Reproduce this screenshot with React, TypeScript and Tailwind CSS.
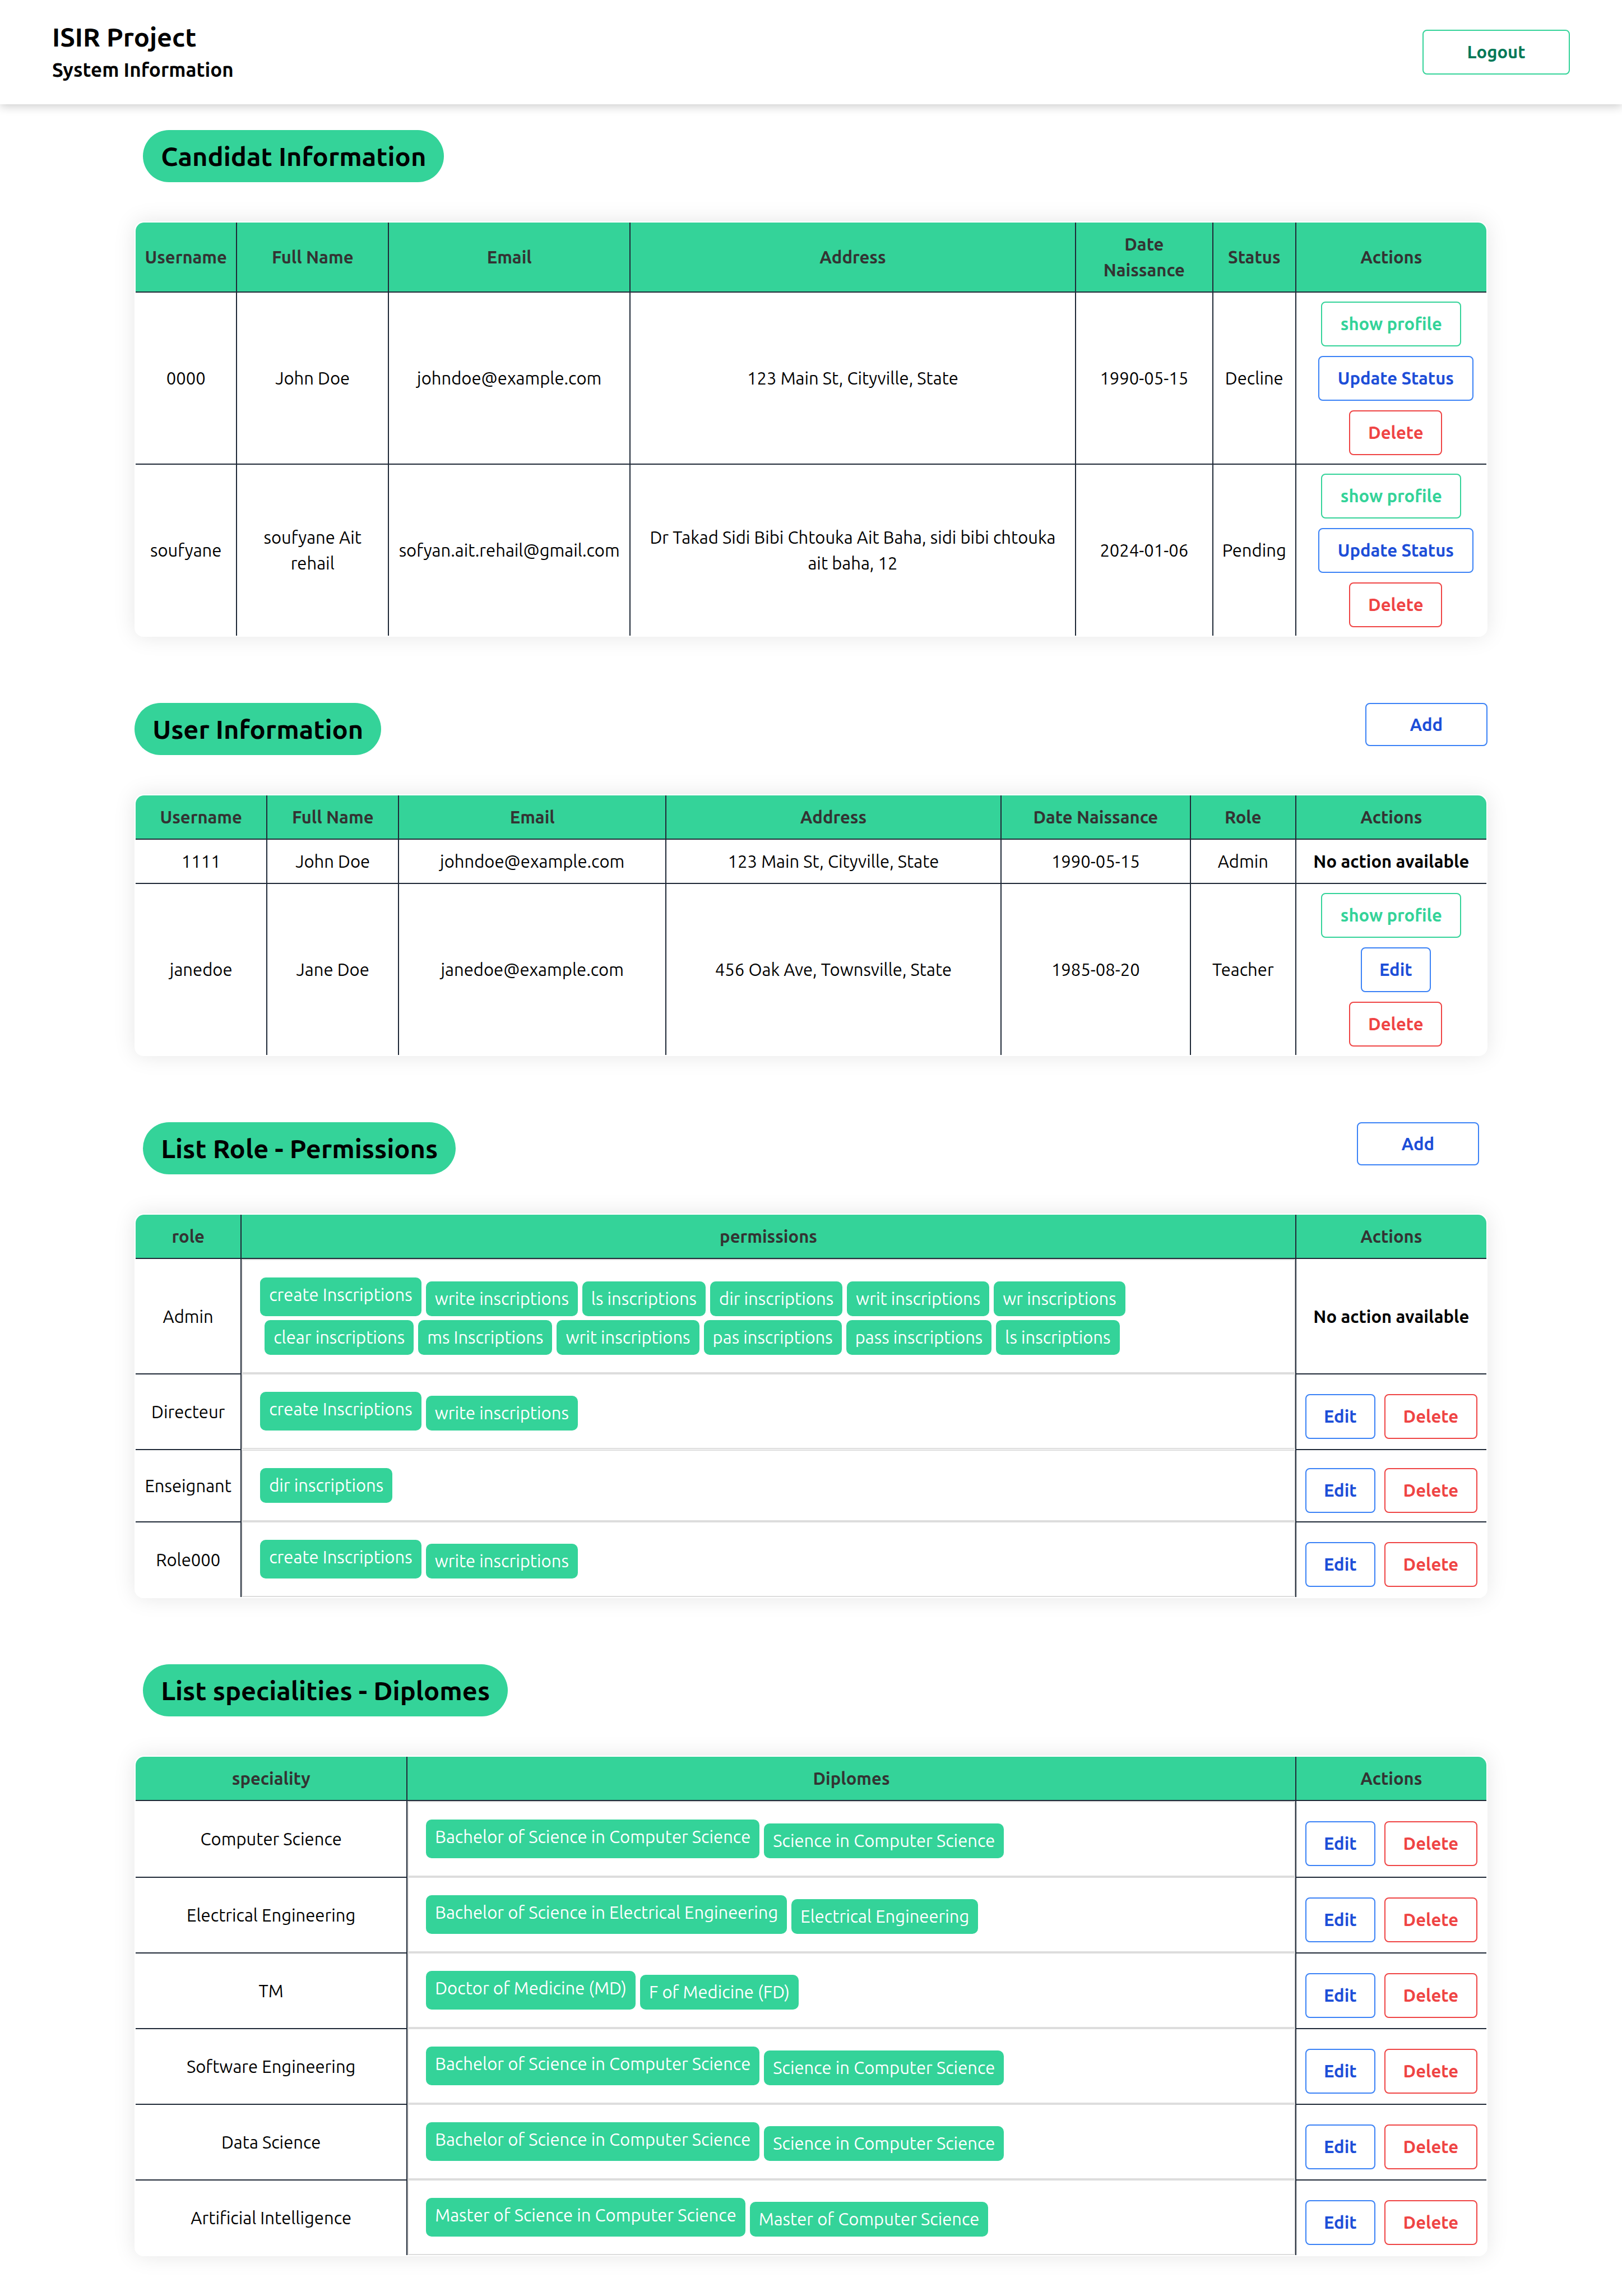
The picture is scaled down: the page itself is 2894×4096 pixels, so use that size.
import type { ReactNode } from "react";

type Tone = "green" | "blue" | "red" | "logout";

const tones: Record<Tone, string> = {
  green: "border-[#34d399] text-[#34d399]",
  blue: "border-[#3b82f6] text-[#1d4ed8]",
  red: "border-[#ef4444] text-[#ef4444]",
  logout: "border-[#34d399] text-[#047857]",
};

function Button({ tone, className, children }: { tone: Tone; className: string; children: ReactNode }) {
  return (
    <button
      type="button"
      className={`cursor-pointer rounded-[8px] border-2 bg-transparent text-center text-[31px] leading-[46px] font-bold ${tones[tone]} ${className}`}
    >
      {children}
    </button>
  );
}

function SectionHeading({ title, inset, add }: { title: string; inset?: boolean; add?: boolean }) {
  return (
    <div className={`mb-[70px] flex items-start justify-between ${inset ? "px-[15px]" : ""}`}>
      <h2 className="rounded-full bg-[#34d399] px-8 text-[47px] leading-[93px] font-bold">{title}</h2>
      {add && (
        <Button tone="blue" className="h-[77px] w-[218px]">
          Add
        </Button>
      )}
    </div>
  );
}

function TableCard({ children }: { children: ReactNode }) {
  return (
    <div className="overflow-hidden rounded-[16px] bg-white p-[2px] shadow-[0_0_39px_rgba(0,0,0,0.1)]">
      <div className="overflow-hidden rounded-t-[15px]">
        <table className="w-full table-fixed border-separate border-spacing-0 text-center text-[31px] leading-[46px]">
          {children}
        </table>
      </div>
    </div>
  );
}

type Column = { label: string; width: string };

function TableHead({ columns }: { columns: Column[] }) {
  return (
    <thead>
      <tr className="bg-[#34d399] text-[#333333]">
        {columns.map((c, i) => (
          <th
            key={c.label}
            scope="col"
            className={`border-b-2 border-[#1f2937] px-[15px] pt-4 pb-[15px] font-bold ${c.width} ${
              i < columns.length - 1 ? "border-r-2" : ""
            }`}
          >
            {c.label}
          </th>
        ))}
      </tr>
    </thead>
  );
}

function Cell({ last, end, children }: { last: boolean; end?: boolean; children: ReactNode }) {
  return (
    <td
      className={`border-[#1f2937] px-[15px] pt-4 pb-[15px] align-middle ${last ? "" : "border-b-2"} ${
        end ? "" : "border-r-2"
      }`}
    >
      {children}
    </td>
  );
}

const NoAction = () => <span className="font-bold">No action available</span>;

function StackedActions({ edit, editWidth }: { edit: string; editWidth: string }) {
  return (
    <div className="flex flex-col items-center gap-[17px]">
      <Button tone="green" className="h-[80px] w-[250px]">
        show profile
      </Button>
      <Button tone="blue" className={`ml-4 h-[80px] ${editWidth}`}>
        {edit}
      </Button>
      <Button tone="red" className="ml-4 h-[80px] w-[166px]">
        Delete
      </Button>
    </div>
  );
}

const candidatColumns: Column[] = [
  { label: "Username", width: "w-[181px]" },
  { label: "Full Name", width: "w-[271px]" },
  { label: "Email", width: "w-[431px]" },
  { label: "Address", width: "" },
  { label: "Date Naissance", width: "w-[245px]" },
  { label: "Status", width: "w-[148px]" },
  { label: "Actions", width: "w-[339px]" },
];

const candidats = [
  ["0000", "John Doe", "johndoe@example.com", "123 Main St, Cityville, State", "1990-05-15", "Decline"],
  [
    "soufyane",
    "soufyane Ait rehail",
    "sofyan.ait.rehail@gmail.com",
    "Dr Takad Sidi Bibi Chtouka Ait Baha, sidi bibi chtouka ait baha, 12",
    "2024-01-06",
    "Pending",
  ],
];

const userColumns: Column[] = [
  { label: "Username", width: "w-[235px]" },
  { label: "Full Name", width: "w-[235px]" },
  { label: "Email", width: "w-[477px]" },
  { label: "Address", width: "" },
  { label: "Date Naissance", width: "w-[338px]" },
  { label: "Role", width: "w-[188px]" },
  { label: "Actions", width: "w-[339px]" },
];

const users = [
  ["1111", "John Doe", "johndoe@example.com", "123 Main St, Cityville, State", "1990-05-15", "Admin"],
  ["janedoe", "Jane Doe", "janedoe@example.com", "456 Oak Ave, Townsville, State", "1985-08-20", "Teacher"],
];

type Group = { name: string; tags: string[]; locked?: boolean };

const roleColumns: Column[] = [
  { label: "role", width: "w-[189px]" },
  { label: "permissions", width: "" },
  { label: "Actions", width: "w-[339px]" },
];

const roles: Group[] = [
  {
    name: "Admin",
    locked: true,
    tags: [
      "create Inscriptions",
      "write inscriptions",
      "ls inscriptions",
      "dir inscriptions",
      "writ inscriptions",
      "wr inscriptions",
      "clear inscriptions",
      "ms Inscriptions",
      "writ inscriptions",
      "pas inscriptions",
      "pass inscriptions",
      "ls inscriptions",
    ],
  },
  { name: "Directeur", tags: ["create Inscriptions", "write inscriptions"] },
  { name: "Enseignant", tags: ["dir inscriptions"] },
  { name: "Role000", tags: ["create Inscriptions", "write inscriptions"] },
];

const specialityColumns: Column[] = [
  { label: "speciality", width: "w-[485px]" },
  { label: "Diplomes", width: "" },
  { label: "Actions", width: "w-[339px]" },
];

const specialities: Group[] = [
  { name: "Computer Science", tags: ["Bachelor of Science in Computer Science", "Science in Computer Science"] },
  {
    name: "Electrical Engineering",
    tags: ["Bachelor of Science in Electrical Engineering", "Electrical Engineering"],
  },
  { name: "TM", tags: ["Doctor of Medicine (MD)", "F of Medicine (FD)"] },
  { name: "Software Engineering", tags: ["Bachelor of Science in Computer Science", "Science in Computer Science"] },
  { name: "Data Science", tags: ["Bachelor of Science in Computer Science", "Science in Computer Science"] },
  {
    name: "Artificial Intelligence",
    tags: ["Master of Science in Computer Science", "Master of Computer Science"],
  },
];

function TagList({ tags, first }: { tags: string[]; first: boolean }) {
  return (
    <div className={`border-2 border-[#dddddd] p-[31px] ${first ? "" : "-mt-[2px]"}`}>
      <ul className="flex flex-wrap pr-8">
        {tags.map((t, i) => (
          <li
            key={i}
            className={`rounded-[10px] bg-[#34d399] px-4 py-2 text-white ${i > 0 ? "mt-[7px] ml-2" : ""}`}
          >
            {t}
          </li>
        ))}
      </ul>
    </div>
  );
}

function GroupTable({ columns, groups }: { columns: Column[]; groups: Group[] }) {
  return (
    <TableCard>
      <TableHead columns={columns} />
      <tbody>
        {groups.map((g, i) => {
          const last = i === groups.length - 1;
          return (
            <tr key={g.name}>
              <Cell last={last}>{g.name}</Cell>
              <td className={`border-r-2 border-[#1f2937] align-middle ${last ? "" : "pb-[2px]"}`}>
                <TagList tags={g.tags} first={i === 0} />
              </td>
              <Cell last={last} end>
                {g.locked ? (
                  <NoAction />
                ) : (
                  <div className="mt-4 flex justify-center gap-4">
                    <Button tone="blue" className="h-[80px] w-[125px] shrink-0">
                      Edit
                    </Button>
                    <Button tone="red" className="h-[80px] w-[166px] shrink-0">
                      Delete
                    </Button>
                  </div>
                )}
              </Cell>
            </tr>
          );
        })}
      </tbody>
    </TableCard>
  );
}

export default function App() {
  return (
    <div className="min-h-screen bg-white pb-[68px] font-['Ubuntu','Noto_Sans',sans-serif] text-black">
      <header className="flex items-center justify-between bg-white px-[93px] py-[35px] shadow-[0_4px_16px_rgba(0,0,0,0.2)]">
        <div>
          <h1 className="text-[47px] leading-[62px] font-bold">ISIR Project</h1>
          <p className="text-[35px] leading-[54px] font-bold">System Information</p>
        </div>
        <Button tone="logout" className="h-[80px] w-[263px]">
          Logout
        </Button>
      </header>

      <main className="mx-auto flex w-[83.4%] flex-col gap-[118px] pt-[46px]">
        <section>
          <SectionHeading title="Candidat Information" inset />
          <TableCard>
            <TableHead columns={candidatColumns} />
            <tbody>
              {candidats.map((row, i) => {
                const last = i === candidats.length - 1;
                return (
                  <tr key={row[0]}>
                    {row.map((v, j) => (
                      <Cell key={j} last={last}>
                        {v}
                      </Cell>
                    ))}
                    <Cell last={last} end>
                      <StackedActions edit="Update Status" editWidth="w-[277px]" />
                    </Cell>
                  </tr>
                );
              })}
            </tbody>
          </TableCard>
        </section>

        <section>
          <SectionHeading title="User Information" add />
          <TableCard>
            <TableHead columns={userColumns} />
            <tbody>
              {users.map((row, i) => {
                const last = i === users.length - 1;
                return (
                  <tr key={row[0]}>
                    {row.map((v, j) => (
                      <Cell key={j} last={last}>
                        {v}
                      </Cell>
                    ))}
                    <Cell last={last} end>
                      {i === 0 ? <NoAction /> : <StackedActions edit="Edit" editWidth="w-[125px]" />}
                    </Cell>
                  </tr>
                );
              })}
            </tbody>
          </TableCard>
        </section>

        <section>
          <SectionHeading title="List Role - Permissions" inset add />
          <GroupTable columns={roleColumns} groups={roles} />
        </section>

        <section>
          <SectionHeading title="List specialities - Diplomes" inset />
          <GroupTable columns={specialityColumns} groups={specialities} />
        </section>
      </main>
    </div>
  );
}
